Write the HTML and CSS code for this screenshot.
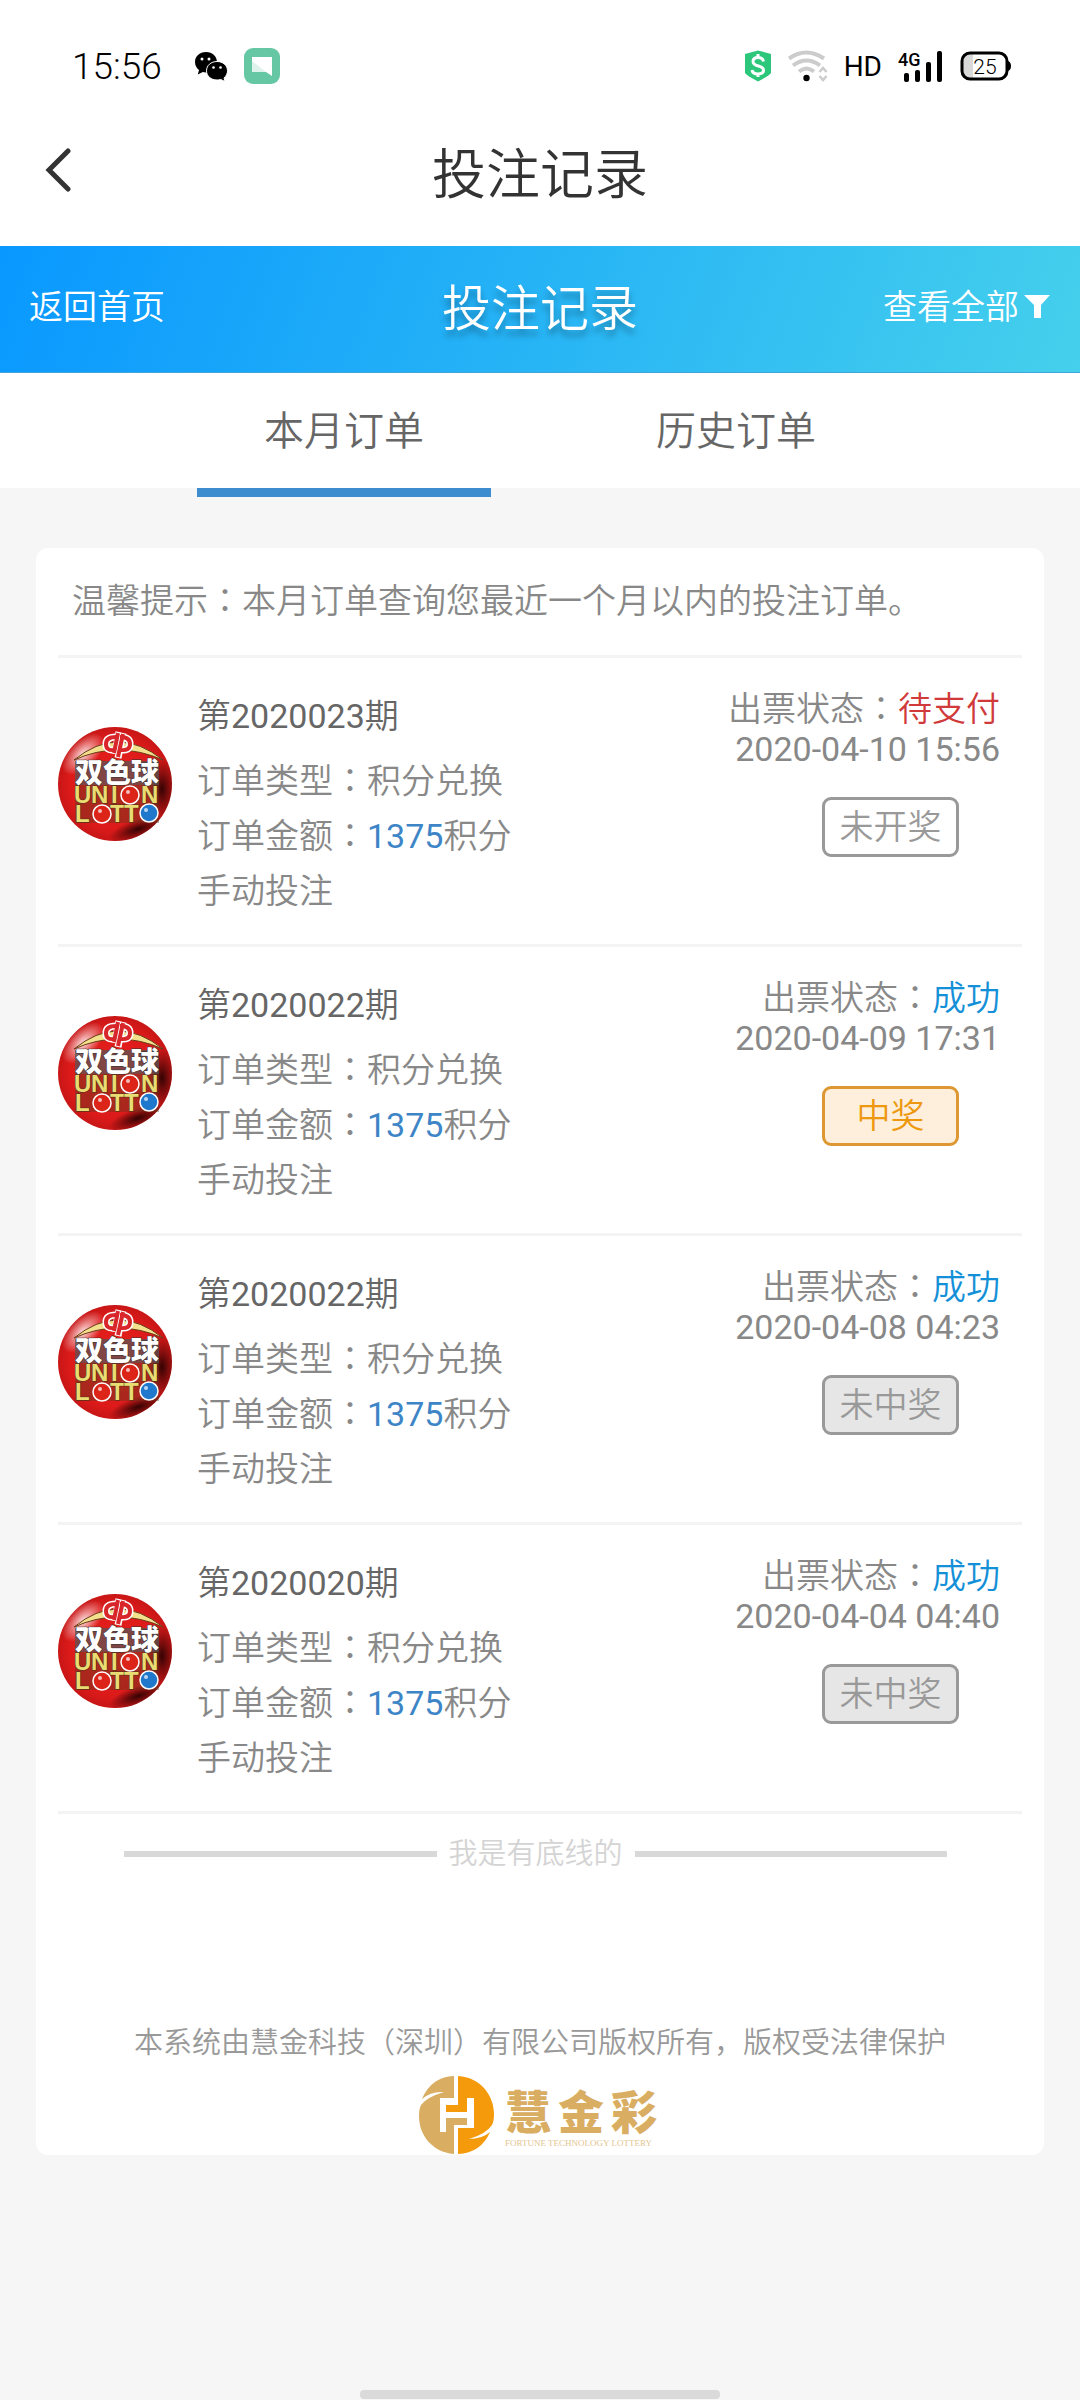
FILE: index.html
```html
<!DOCTYPE html>
<html lang="zh-CN">
<head>
<meta charset="utf-8">
<meta name="viewport" content="width=device-width, initial-scale=1">
<title>投注记录</title>
<link rel="stylesheet" href="styles.css">
</head>
<body>
<svg class="sprite" aria-hidden="true">
  <defs>
    <radialGradient id="ball" cx="0.5" cy="0.5" r="0.5">
      <stop offset="0" stop-color="#e8231c"/>
      <stop offset="0.8" stop-color="#dc1a1a"/>
      <stop offset="1" stop-color="#c81616"/>
    </radialGradient>
    <radialGradient id="shine" cx="0.5" cy="0.5" r="0.5">
      <stop offset="0" stop-color="#fff" stop-opacity="0.85"/>
      <stop offset="1" stop-color="#fff" stop-opacity="0"/>
    </radialGradient>
    <radialGradient id="shade" cx="0.5" cy="0.5" r="0.5">
      <stop offset="0" stop-color="#200" stop-opacity="0.9"/>
      <stop offset="1" stop-color="#200" stop-opacity="0"/>
    </radialGradient>
    <clipPath id="ball-clip"><circle cx="57" cy="57" r="57"/></clipPath>
    <symbol id="lotto" viewBox="0 0 114 114">
      <circle cx="57" cy="57" r="57" fill="url(#ball)"/>
      <g clip-path="url(#ball-clip)">
        <ellipse cx="25" cy="27" rx="26" ry="14" fill="url(#shine)" transform="rotate(-45 25 27)"/>
        <ellipse cx="104" cy="62" rx="14" ry="30" fill="url(#shade)"/>
        <ellipse cx="80" cy="102" rx="30" ry="10" fill="url(#shade)" transform="rotate(-18 80 102)"/>
      </g>
      <path d="M16 33Q60 -3 105 33Q60 13 16 33Z" fill="#f3e08c" stroke="#6b3a1a" stroke-width="1"/>
      <g fill="none" stroke="#fff" stroke-width="7">
        <path d="M58 10q-10 0-10 7t8 6"/>
        <path d="M62 10q10 0 10 7t-9 6"/>
        <path d="M61 5l-4 22M65 6l-5 25"/>
      </g>
      <g fill="none" stroke="#d8262b" stroke-width="4">
        <path d="M58 10q-10 0-10 7t8 6"/>
        <path d="M62 10q10 0 10 7t-9 6"/>
        <path d="M60 6l-4 20M65 7l-5 23"/>
      </g>
      <rect x="17" y="34" width="84" height="24" fill="#555" opacity="0.7"/>
      <rect x="17" y="58" width="84" height="38" fill="#5d3a20" opacity="0.4"/>
      <text class="lotto-cn" x="17" y="56">双色球</text>
      <g class="lotto-en">
        <text x="16" y="76">U</text><text x="33" y="76">N</text><text x="53" y="76">I</text><text x="83" y="76">N</text>
        <text x="17" y="95">L</text><text x="52" y="95">T</text><text x="66" y="95">T</text>
      </g>
      <g stroke="#fff" stroke-width="1.500">
        <circle cx="72" cy="68" r="9" fill="#dc2418"/>
        <circle cx="44" cy="87" r="9" fill="#dc2418"/>
        <circle cx="91" cy="86" r="9" fill="#1f78cc"/>
      </g>
      <g fill="#fff" opacity="0.7"><circle cx="70" cy="65" r="2"/><circle cx="42" cy="84" r="2"/><circle cx="88" cy="83" r="2"/></g>
    </symbol>
  </defs>
</svg>

<div class="page">
  <div class="status-bar">
    <div class="status-side">
      <span class="clock">15:56</span>
      <svg class="ic-wechat" width="34" height="30" viewBox="0 0 34 30" aria-hidden="true">
        <path d="M12 1C5.400 1 1 5.500 1 11c0 3.400 1.600 6 4 8l-1.200 4.500 5-2.500c1 .3 2 .4 3.200.4 6.600 0 11-4.600 11-10.200S18.600 1 12 1z"/>
        <path d="M23 10.500c-6 0-10.500 4-10.500 9.300S17 29 23 29c1.300 0 2.500-.2 3.600-.6L31 30.500l-1-3.600c2.200-1.700 3.500-4.200 3.500-7.100 0-5.300-4.500-9.300-10.500-9.300z" stroke="#fff" stroke-width="1"/>
        <g fill="#fff"><circle cx="8" cy="8" r="1.500"/><circle cx="15" cy="8" r="1.500"/><circle cx="19.500" cy="16.500" r="1.300"/><circle cx="26.500" cy="16.500" r="1.300"/></g>
      </svg>
      <svg class="ic-chat" width="36" height="36" viewBox="0 0 36 36" aria-hidden="true">
        <rect width="36" height="36" rx="9" fill="#66c7a5"/>
        <path d="M8 9h20v19l-6-4H8z" fill="#fff"/>
        <path d="M8 13l14 11H8z" fill="#dff3ec"/>
      </svg>
    </div>
    <div class="status-side">
      <svg width="28" height="32" viewBox="0 0 28 32" aria-hidden="true">
        <path d="M14 0.500L27 4v19q-1 2-13 8.500Q2 25 1 23V4z" fill="#2dc77b"/>
        <path d="M19.500 11.500C19 8.500 17 7.500 14 7.500s-5 1.500-5 4c0 6 10.500 3 10.500 8.500 0 3-2.500 4-5.500 4s-5.500-1-6-4M14 4v4M14 23v4" fill="none" stroke="#fff" stroke-width="3"/>
      </svg>
      <svg class="ic-wifi" width="40" height="32" viewBox="0 0 40 32" aria-hidden="true">
        <g fill="none" stroke="#ccc" stroke-width="4">
          <path d="M1 8.500Q18 -3.500 36 8.500"/><path d="M5 15.500Q18.500 5.500 32 15.500"/><path d="M11 21.500Q18.500 15.500 26 21.500"/>
          <path d="M31.500 22l3.500-4 3.500 4M31.500 26l3.500 4 3.500-4" stroke-width="2.500"/>
        </g>
        <circle cx="18.500" cy="28" r="3.200"/>
      </svg>
      <span class="hd">HD</span>
      <svg class="ic-signal" width="46" height="32" viewBox="0 0 46 32" aria-label="4G">
        <text x="0" y="16" class="net">4G</text>
        <rect x="6" y="23" width="5" height="9" rx="2"/><rect x="17" y="20" width="5" height="12" rx="2"/><rect x="28" y="12" width="5" height="20" rx="2"/><rect x="39" y="1" width="5" height="31" rx="2"/>
      </svg>
      <svg class="ic-battery" width="52" height="30" viewBox="0 0 52 30" aria-label="25%">
        <path d="M13 3H10Q3 3 3 10v10q0 7 7 7h3z" fill="#d9d9d9"/>
        <rect x="2" y="2" width="45" height="26" rx="8" fill="none" stroke="#000" stroke-width="3"/>
        <path d="M48 10q3 1 3 5t-3 5z"/>
        <text x="25" y="23" text-anchor="middle" class="charge">25</text>
      </svg>
    </div>
  </div>

  <header class="nav-bar">
    <button class="back" type="button" aria-label="返回">
      <svg width="28" height="44" viewBox="0 0 28 44"><path d="M24 3L5 22l19 19" fill="none" stroke="#333" stroke-width="5" stroke-linecap="round"/></svg>
    </button>
    <h1 class="nav-title">投注记录</h1>
  </header>

  <div class="hero">
    <a class="hero-link" href="#home">返回首页</a>
    <h2 class="hero-title">投注记录</h2>
    <a class="hero-link hero-filter" href="#filter">查看全部<svg width="28" height="26" viewBox="0 0 28 26" aria-hidden="true"><path d="M1 3h26l-9 10v13h-7V13z" fill="#fff"/></svg></a>
  </div>

  <nav class="tabs">
    <button class="tab tab-active" type="button">本月订单</button>
    <button class="tab" type="button">历史订单</button>
  </nav>

  <main class="card">
    <p class="tip">温馨提示<span class="colon" lang="zh-TW">：</span>本月订单查询您最近一个月以内的投注订单。</p>
    <ul class="orders">
      <li class="order">
        <svg class="logo" role="img" aria-label="双色球"><use href="#lotto"/></svg>
        <div class="info">
          <h3 class="issue">第<span class="num">2020023</span>期</h3>
          <p>订单类型<span class="colon" lang="zh-TW">：</span>积分兑换</p>
          <p>订单金额<span class="colon" lang="zh-TW">：</span><span class="num amount">1375</span>积分</p>
          <p>手动投注</p>
        </div>
        <div class="state">
          <p>出票状态<span class="colon" lang="zh-TW">：</span><span class="pending">待支付</span></p>
          <time class="num">2020-04-10 15:56</time>
          <span class="badge">未开奖</span>
        </div>
      </li>
      <li class="order">
        <svg class="logo" role="img" aria-label="双色球"><use href="#lotto"/></svg>
        <div class="info">
          <h3 class="issue">第<span class="num">2020022</span>期</h3>
          <p>订单类型<span class="colon" lang="zh-TW">：</span>积分兑换</p>
          <p>订单金额<span class="colon" lang="zh-TW">：</span><span class="num amount">1375</span>积分</p>
          <p>手动投注</p>
        </div>
        <div class="state">
          <p>出票状态<span class="colon" lang="zh-TW">：</span><span class="success">成功</span></p>
          <time class="num">2020-04-09 17:31</time>
          <span class="badge badge-win">中奖</span>
        </div>
      </li>
      <li class="order">
        <svg class="logo" role="img" aria-label="双色球"><use href="#lotto"/></svg>
        <div class="info">
          <h3 class="issue">第<span class="num">2020022</span>期</h3>
          <p>订单类型<span class="colon" lang="zh-TW">：</span>积分兑换</p>
          <p>订单金额<span class="colon" lang="zh-TW">：</span><span class="num amount">1375</span>积分</p>
          <p>手动投注</p>
        </div>
        <div class="state">
          <p>出票状态<span class="colon" lang="zh-TW">：</span><span class="success">成功</span></p>
          <time class="num">2020-04-08 04:23</time>
          <span class="badge badge-lose">未中奖</span>
        </div>
      </li>
      <li class="order">
        <svg class="logo" role="img" aria-label="双色球"><use href="#lotto"/></svg>
        <div class="info">
          <h3 class="issue">第<span class="num">2020020</span>期</h3>
          <p>订单类型<span class="colon" lang="zh-TW">：</span>积分兑换</p>
          <p>订单金额<span class="colon" lang="zh-TW">：</span><span class="num amount">1375</span>积分</p>
          <p>手动投注</p>
        </div>
        <div class="state">
          <p>出票状态<span class="colon" lang="zh-TW">：</span><span class="success">成功</span></p>
          <time class="num">2020-04-04 04:40</time>
          <span class="badge badge-lose">未中奖</span>
        </div>
      </li>
    </ul>
    <p class="end">我是有底线的</p>
    <footer class="copyright">
      <p>本系统由慧金科技（深圳）有限公司版权所有，版权受法律保护</p>
      <svg width="244" height="80" viewBox="0 0 244 80" role="img" aria-label="慧金彩">
        <path d="M36 1v78C14 77 1 60 1 41q0-7 2-11 6-8 23-13-13-1-22 7Q13 2 36 1z" fill="#d9ad62"/>
        <path d="M40 1c22 1 36 19 36 38q0 7-2 11-6 9-23 14 13 0 21-7Q63 78 40 79z" fill="#f59a0a"/>
        <path d="M22 23h18v7h9v-7h7v30H40v4H28H22z" fill="#fff"/>
        <path d="M28 30h21v7H28z" fill="#f59a0a"/>
        <path d="M28 43h21v7H36v7h-8z" fill="#d9ad62"/>
        <path d="M40 23h9v8h-9z" fill="#f59a0a"/>
        <path d="M40 53h16v5H40z" fill="#f59a0a"/>
        <g class="brand"><text x="87" y="54">慧</text><text x="140" y="54">金</text><text x="193" y="54">彩</text></g>
        <text class="brand-en" x="87" y="71">FORTUNE TECHNOLOGY LOTTERY</text>
      </svg>
    </footer>
  </main>
  <div class="home-indicator"></div>
</div>
</body>
</html>
```
FILE: styles.css
```css
* {
  box-sizing: border-box;
}

body,
h1,
h2,
h3,
p,
ul {
  margin: 0;
  padding: 0;
  font-weight: 350;
}

body {
  background: #f6f6f6;
  color: #888;
  font-family: Roboto, "Noto Sans CJK SC", sans-serif;
  font-size: 34px;
}

button {
  padding: 0;
  border: 0;
  background: none;
  font: inherit;
  cursor: pointer;
}

a {
  text-decoration: none;
}

svg {
  display: block;
  flex: none;
}

.sprite {
  position: absolute;
  width: 0;
  height: 0;
}

.page {
  display: flex;
  flex-direction: column;
  min-height: 100vh;
}

.num {
  font-weight: 400;
}

/* system status bar */
.status-bar {
  display: flex;
  justify-content: space-between;
  height: 98px;
  padding: 34px 68px 0 72px;
  background: #fff;
  color: #000;
}

.status-side {
  display: flex;
  align-items: center;
}

.clock {
  font-size: 37px;
}

.ic-wechat {
  margin-left: 32px;
}

.ic-chat,
.ic-wifi,
.hd,
.ic-signal,
.ic-battery {
  margin-left: 16px;
}

.hd {
  font-size: 28px;
  font-weight: 400;
}

.net {
  font-size: 18px;
  font-weight: 500;
}

.charge {
  font-size: 21px;
}

/* app title */
.nav-bar {
  display: grid;
  grid-template-columns: 1fr auto 1fr;
  align-items: center;
  height: 148px;
  padding: 0 44px 4px;
  background: #fff;
}

.back {
  justify-self: start;
}

.nav-title {
  color: #333;
  font-size: 54px;
}

.hero {
  display: grid;
  grid-template-columns: 1fr auto 1fr;
  align-items: center;
  height: 127px;
  padding: 0 29px 9px;
  border-bottom: 1px solid #45a5d8;
  background: linear-gradient(110deg, #0998ff, #45d0ec);
}

.hero-link {
  color: #fff;
}

.hero-filter {
  display: flex;
  align-items: center;
  justify-self: end;
  gap: 4px;
}

.hero-title {
  color: #fff;
  font-size: 49px;
  text-shadow: 0 6px 6px rgba(0, 0, 0, 0.3);
}

.tabs {
  display: flex;
  justify-content: center;
  height: 115px;
  padding: 0 148px;
  background: #fff;
}

.tab {
  position: relative;
  flex: 1;
  padding-bottom: 5px;
  color: #666;
  font-size: 40px;
}

.tab-active::after {
  position: absolute;
  top: 100%;
  left: 12.5%;
  width: 75%;
  height: 9px;
  background: #3d8ccf;
  content: "";
}

/* order list */
.card {
  margin: 60px 36px 0;
  padding: 0 22px;
  border-radius: 12px;
  background: #fff;
}

.tip {
  padding: 26px 14px 27px;
  border-bottom: 3px solid #f4f4f4;
  line-height: 54px;
}

.colon {
  font-family: "Noto Sans CJK TC", sans-serif;
  line-height: 1;
}

.orders {
  list-style: none;
}

.order {
  display: flex;
  align-items: flex-start;
  padding: 31px 22px 25px 0;
  border-bottom: 3px solid #f4f4f4;
}

.logo {
  width: 114px;
  height: 114px;
  margin: 38px 25px 0 0;
}

.lotto-cn {
  fill: #fff;
  stroke: #333;
  stroke-width: 1px;
  paint-order: stroke;
  font-size: 28px;
  font-weight: 900;
}

.lotto-en {
  fill: #e9dc73;
  stroke: #4a3418;
  stroke-width: 1px;
  paint-order: stroke;
  font-family: "Liberation Sans", sans-serif;
  font-size: 24px;
  font-weight: 700;
}

.info {
  flex: 1;
  line-height: 55px;
}

.issue {
  margin-bottom: 10px;
  color: #666;
  font-size: 34px;
}

.amount {
  color: #3d85c6;
}

.state {
  display: flex;
  flex-direction: column;
  align-items: flex-end;
  line-height: 40px;
}

.pending {
  color: #d03a3a;
}

.success {
  color: #1490d8;
}

.badge {
  width: 137px;
  margin: 28px 41px 0 0;
  border: 3px solid #999;
  border-radius: 9px;
  color: #999;
  font-weight: 350;
  line-height: 54px;
  text-align: center;
}

.badge-win {
  border-color: #dd9834;
  background: #fdefdb;
  color: #ee980f;
}

.badge-lose {
  background: #e6e6e6;
}

.end {
  display: flex;
  align-items: center;
  gap: 12px;
  padding: 18px 75px 0 66px;
  color: #d4d4d4;
  font-size: 29px;
  line-height: 44px;
}

.end::before,
.end::after {
  flex: 1;
  height: 6px;
  background: #d8d8d8;
  content: "";
}

.copyright {
  display: flex;
  flex-direction: column;
  align-items: center;
  padding-top: 145px;
  color: #999;
  font-size: 29px;
  line-height: 44px;
}

.copyright svg {
  margin-top: 10px;
}

.brand {
  fill: #d9ad62;
  font-size: 46px;
  font-weight: 900;
}

.brand-en {
  fill: #e3c490;
  font-family: "Liberation Serif", serif;
  font-size: 9px;
}

.home-indicator {
  align-self: center;
  width: 33.3333%;
  height: 9px;
  margin-top: auto;
  margin-bottom: 1px;
  border-radius: 4px;
  background: #dadada;
}
```
